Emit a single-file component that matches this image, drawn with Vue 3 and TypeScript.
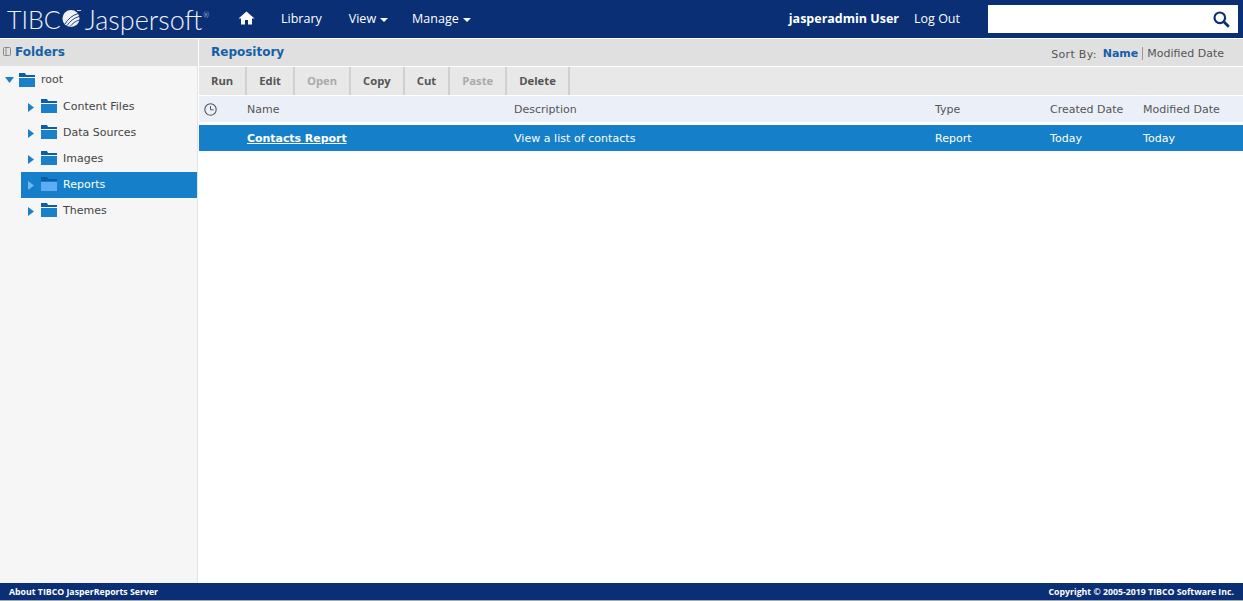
<template>
  <div class="page">
    <header class="topbar">
      <div class="logo">
        <span class="logo-tibco">TIBC</span>
        <svg class="logo-ball" width="20" height="20" viewBox="0 0 20 20">
          <circle cx="9" cy="10.500" r="8.500" fill="#eef1f6" />
          <path d="M3 16C6 11 10 7.500 16 5.500M5 17.500C8 13 12 10 17 8.500M8 18.500C10.500 15.500 13.500 13 17.500 12" fill="none" stroke="#0a2f75" stroke-width="0.900" />
          <path d="M15 2.500H19" stroke="#c8d2e4" stroke-width="1" />
        </svg>
        <span class="logo-jasper">Jaspersoft</span>
        <span class="logo-tm">®</span>
      </div>
      <nav class="nav">
        <svg class="home" width="17" height="14" viewBox="0 0 17 14">
          <path d="M8.500 0.500L0.500 7.500H3V13.500H7V9H10V13.500H14V7.500H16.500Z" fill="#fff" />
        </svg>
        <a class="nav-item lib">Library</a>
        <a class="nav-item view">View<i class="caret" /></a>
        <a class="nav-item">Manage<i class="caret" /></a>
      </nav>
      <div class="user">
        <b>jasperadmin User</b>
        <a>Log Out</a>
      </div>
      <div class="search">
        <svg width="17" height="17" viewBox="0 0 17 17">
          <circle cx="6.800" cy="6.800" r="5.300" fill="none" stroke="#0a2f75" stroke-width="2.200" />
          <path d="M10.800 10.800L15.800 15.800" stroke="#0a2f75" stroke-width="2.800" />
        </svg>
      </div>
    </header>

    <div class="body">
      <aside class="side">
        <div class="side-title">
          <svg width="8" height="9" viewBox="0 0 8 9">
            <rect x="0.500" y="0.500" width="7" height="8" rx="1" fill="none" stroke="#8a8a8a" />
            <path d="M3 1V8" stroke="#8a8a8a" />
          </svg>
          <span>Folders</span>
        </div>
        <div class="root-row">
          <svg class="arrow-down" width="9" height="6" viewBox="0 0 9 6"><path d="M0 0H9L4.500 6Z" fill="#1a80c8" /></svg>
          <svg width="16" height="14" viewBox="0 0 16 14">
            <path d="M0 0H6L7 2H16V4H0Z" fill="#0d5ea8" />
            <rect y="5" width="16" height="9" fill="#1a80c8" />
          </svg>
          <span>root</span>
        </div>
        <ul class="tree">
          <li v-for="f in folders" :key="f" :class="{ sel: f === 'Reports' }">
            <svg class="arrow" width="6" height="9" viewBox="0 0 6 9"><path d="M0 0L6 4.500L0 9Z" /></svg>
            <svg class="folder" width="16" height="14" viewBox="0 0 16 14">
              <path class="tab" d="M0 0H6L7 2H16V4H0Z" />
              <rect class="front" y="5" width="16" height="9" />
            </svg>
            <span>{{ f }}</span>
          </li>
        </ul>
      </aside>

      <main class="main">
        <div class="main-title">
          <h1>Repository</h1>
          <div class="sort">
            <span class="sort-label">Sort By:</span>
            <b>Name</b>
            <span class="sort-other">Modified Date</span>
          </div>
        </div>
        <div class="toolbar">
          <button v-for="b in buttons" :key="b.label" :class="{ off: b.off }">{{ b.label }}</button>
        </div>
        <div class="row head">
          <svg class="clock" width="13" height="13" viewBox="0 0 13 13">
            <circle cx="6.500" cy="6.500" r="5.700" fill="none" stroke="#555" stroke-width="1.100" />
            <path d="M6.500 3V6.800H9.500" fill="none" stroke="#555" />
          </svg>
          <span class="c-name">Name</span>
          <span class="c-desc">Description</span>
          <span class="c-type">Type</span>
          <span class="c-created">Created Date</span>
          <span class="c-mod">Modified Date</span>
        </div>
        <div class="row item">
          <span class="c-icon" />
          <a class="c-name">Contacts Report</a>
          <span class="c-desc">View a list of contacts</span>
          <span class="c-type">Report</span>
          <span class="c-created">Today</span>
          <span class="c-mod">Today</span>
        </div>
      </main>
    </div>

    <footer class="foot">
      <span>About TIBCO JasperReports Server</span>
      <span>Copyright © 2005-2019 TIBCO Software Inc.</span>
    </footer>
  </div>
</template>

<script setup lang="ts">
const folders: string[] = ['Content Files', 'Data Sources', 'Images', 'Reports', 'Themes']
const buttons: { label: string; off?: boolean }[] = [
  { label: 'Run' },
  { label: 'Edit' },
  { label: 'Open', off: true },
  { label: 'Copy' },
  { label: 'Cut' },
  { label: 'Paste', off: true },
  { label: 'Delete' },
]
</script>

<style>
html, body {
  margin: 0;
  background: #fff;
}
</style>

<style scoped>
.page {
  height: 601px;
  display: flex;
  flex-direction: column;
  overflow: hidden;
  font-family: "DejaVu Sans", sans-serif;
  font-size: 11px;
  color: #555;
}
.topbar {
  height: 38px;
  flex: none;
  background: #0a2f75;
  display: flex;
  align-items: center;
  color: #fff;
  font-family: "Open Sans", sans-serif;
  font-size: 12.500px;
  font-weight: 500;
}
.logo {
  width: 238px;
  flex: none;
  display: flex;
  align-items: center;
  padding-left: 7px;
  box-sizing: border-box;
  font-family: Lato, sans-serif;
  font-weight: 300;
  color: #eef1f6;
}
.logo-tibco {
  font-size: 25px;
}
.logo-jasper {
  font-size: 27px;
}
.logo-ball {
  margin: -2px 3px 0 1px;
}
.logo-tm {
  font-size: 7px;
  align-self: flex-start;
  margin: 8px 0 0 1px;
}
.nav {
  display: flex;
  align-items: center;
  padding-bottom: 2px;
}
.home {
  margin-right: 26px;
}
.lib {
  margin-right: 27px;
}
.view {
  margin-right: 24px;
}
.caret {
  display: inline-block;
  margin-left: 4px;
  vertical-align: 1px;
  border-left: 4px solid transparent;
  border-right: 4px solid transparent;
  border-top: 4px solid #fff;
}
.user {
  margin-left: auto;
  display: flex;
  gap: 15px;
  margin-right: 28px;
  padding-bottom: 2px;
}
.search {
  width: 250px;
  height: 28px;
  background: #fff;
  margin-right: 5px;
  display: flex;
  align-items: center;
  justify-content: flex-end;
  padding-right: 8px;
  box-sizing: border-box;
}
.body {
  flex: 1;
  display: flex;
  border-top: 1px solid #fff;
  min-height: 0;
}
.side {
  width: 197px;
  flex: none;
  background: #f6f6f6;
  border-right: 1px solid #e4e4e4;
}
.side-title {
  height: 27px;
  margin-right: -1px;
  background: #e0e0e0;
  display: flex;
  align-items: center;
  gap: 4px;
  padding: 0 0 2px 3px;
  box-sizing: border-box;
  color: #1360a8;
  font-weight: 700;
  font-size: 12px;
}
.root-row {
  height: 26px;
  margin-top: 1px;
  display: flex;
  align-items: center;
  padding-left: 5px;
  font-size: 11px;
}
.arrow-down {
  margin-right: 5px;
}
.root-row span {
  margin: 0 0 2px 6px;
  color: #444;
}
.tree {
  list-style: none;
  margin: 1px 0 0;
  padding: 0 0 0 21px;
}
.tree li {
  height: 26px;
  display: flex;
  align-items: center;
  padding-left: 7px;
  font-size: 11px;
  color: #444;
}
.arrow {
  fill: #1a80c8;
  margin-right: 7px;
}
.folder {
  margin-bottom: 2px;
}
.tab {
  fill: #0d5ea8;
}
.front {
  fill: #1a80c8;
}
.tree span {
  margin: 0 0 2px 6px;
}
.tree li.sel {
  background: #1580c9;
  color: #fff;
}
.sel .arrow {
  fill: #6fb9f0;
}
.sel .front {
  fill: #5dadf5;
}
.main {
  flex: 1;
  min-width: 0;
  margin-left: 1px;
}
.main-title {
  height: 27px;
  background: #e0e0e0;
  display: flex;
  align-items: center;
  justify-content: space-between;
  padding: 0 19px 0 12px;
}
h1 {
  margin: 0 0 2px;
  font-size: 12px;
  font-weight: 700;
  color: #1360a8;
}
.sort {
  display: flex;
  align-items: center;
  margin-top: 2px;
}
.sort-label {
  margin-right: 6px;
  margin-top: 2px;
  letter-spacing: 0.300px;
}
.sort b {
  color: #1360a8;
  padding-right: 4px;
  border-right: 1px solid #999;
}
.sort-other {
  margin-left: 4px;
}
.toolbar {
  height: 28px;
  margin-top: 1px;
  background: #e8e8e8;
  display: flex;
}
.toolbar button {
  padding: 0 12px 2px;
  border: 0;
  border-right: 2px solid #d0d0d0;
  background: transparent;
  font: 700 11.250px "Open Sans", sans-serif;
  color: #555;
}
.toolbar .off {
  color: #aaa;
}
.row {
  display: flex;
  align-items: center;
}
.head {
  height: 26px;
  background: #ebf0f8;
  margin-top: 1px;
  padding-left: 5px;
}
.clock {
  width: 13px;
  margin-right: 30px;
}
.item {
  height: 26px;
  margin-top: 3px;
  background: #1580c9;
  color: #fff;
  padding-left: 5px;
  letter-spacing: 0.040px;
}
.c-icon {
  width: 43px;
}
.c-name {
  width: 267px;
}
a.c-name {
  font-weight: 700;
  text-decoration: underline;
  letter-spacing: -0.050px;
}
.c-desc {
  width: 421px;
}
.c-type {
  width: 115px;
}
.c-created {
  width: 93px;
}
.foot {
  height: 17px;
  flex: none;
  background: #0a2f75;
  color: #fff;
  display: flex;
  align-items: center;
  justify-content: space-between;
  padding: 0 9px;
  font-family: "Open Sans", sans-serif;
  font-weight: 700;
  font-size: 8.750px;
  border-bottom: 1px solid #a8a8a8;
}
</style>
